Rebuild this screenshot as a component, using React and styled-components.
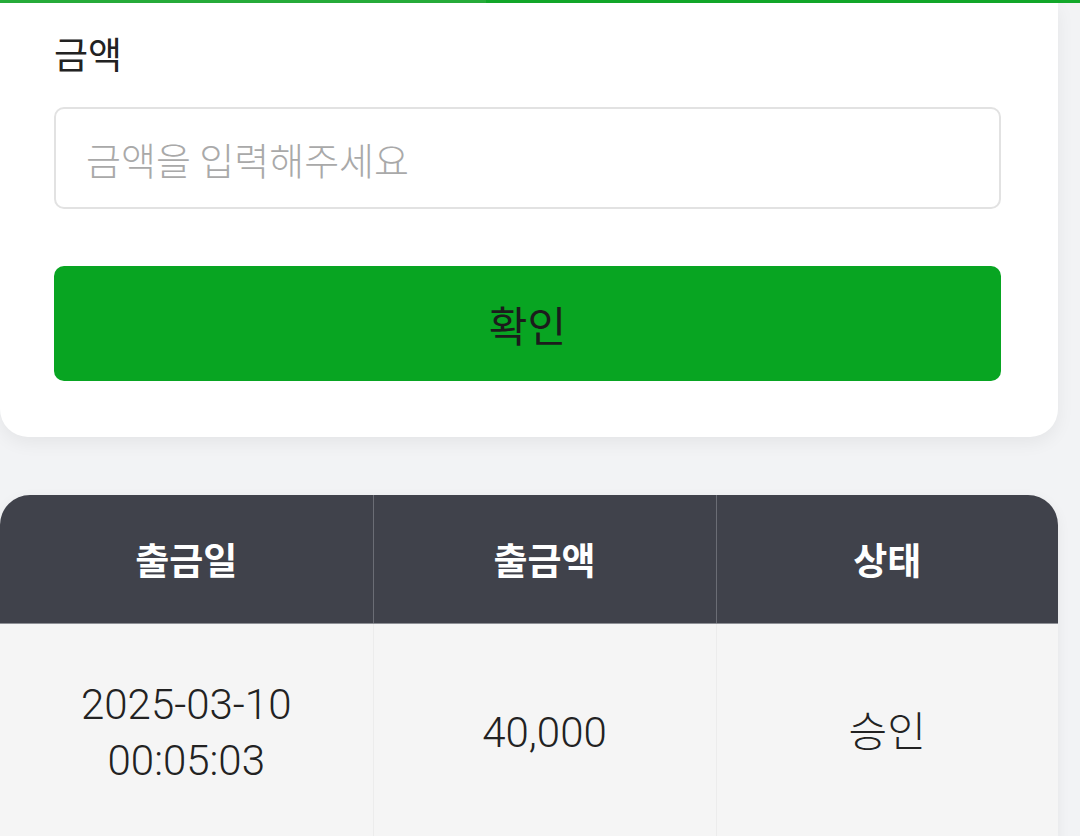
import React from "react";
import styled, { createGlobalStyle } from "styled-components";

const Global = createGlobalStyle`
  html, body { margin: 0; padding: 0; }
  body {
    background: #f2f3f5;
    font-family: Roboto, "Noto Sans CJK KR", sans-serif;
    color: #222;
    overflow: hidden;
  }
  * { box-sizing: border-box; }
`;

const Page = styled.div`
  width: 1080px;
  min-height: 836px;
  background: #f2f3f5;
`;

const TopLine = styled.div`
  height: 3px;
  background: linear-gradient(90deg, #27ad3a 0%, #27ad3a 45%, #12a82a 45%, #12a82a 100%);
`;

const Content = styled.div`
  width: 1058px;
`;

const Card = styled.section`
  background: #fff;
  border-radius: 0 0 28px 28px;
  padding: 22px 57px 56px 54px;
  box-shadow: 0 6px 18px rgba(0, 0, 0, 0.06);
  display: flex;
  flex-direction: column;
`;

const Label = styled.label`
  font-family: "Noto Sans CJK KR", sans-serif;
  font-size: 37px;
  line-height: 56px;
  font-weight: 400;
  color: #222;
`;

const Input = styled.input`
  margin-top: 26px;
  height: 102px;
  border: 2px solid #e2e2e2;
  border-radius: 10px;
  padding: 0 30px;
  font-family: "Noto Sans CJK KR", sans-serif;
  font-size: 38px;
  font-weight: 300;
  color: #222;
  outline: none;
  &::placeholder { color: #a9a9a9; }
`;

const Button = styled.button`
  margin-top: 57px;
  height: 115px;
  border: none;
  border-radius: 10px;
  background: #08a522;
  color: #1c1c1c;
  font-family: "Noto Sans CJK KR", sans-serif;
  font-size: 42px;
  font-weight: 400;
`;

const TableWrap = styled.div`
  margin-top: 58px;
  border-radius: 30px 30px 0 0;
  overflow: hidden;
  box-shadow: 0 4px 14px rgba(0, 0, 0, 0.06);
`;

const Table = styled.table`
  width: 100%;
  border-collapse: collapse;
  table-layout: fixed;
`;

const Th = styled.th`
  height: 128px;
  background: #40424b;
  color: #fff;
  font-family: "Noto Sans CJK KR", sans-serif;
  font-weight: 700;
  font-size: 37px;
  border-bottom: 1px solid #8e9096;
  border-left: 1px solid #6b6d75;
  &:first-child { border-left: none; }
  padding: 0;
`;

const Td = styled.td`
  height: 220px;
  background: #f5f5f5;
  text-align: center;
  font-size: 42px;
  font-weight: 300;
  line-height: 56px;
  color: #222;
  border-left: 1px solid #ececec;
  &:first-child { border-left: none; }
  padding: 0;
`;

export default function App() {
  return (
    <>
      <Global />
      <Page>
        <TopLine />
        <Content>
          <Card>
            <Label>금액</Label>
            <Input placeholder="금액을 입력해주세요" />
            <Button>확인</Button>
          </Card>
          <TableWrap>
            <Table>
              <colgroup>
                <col style={{ width: "373px" }} />
                <col style={{ width: "343px" }} />
                <col style={{ width: "342px" }} />
              </colgroup>
              <thead>
                <tr>
                  <Th>출금일</Th>
                  <Th>출금액</Th>
                  <Th>상태</Th>
                </tr>
              </thead>
              <tbody>
                <tr>
                  <Td>2025-03-10<br />00:05:03</Td>
                  <Td>40,000</Td>
                  <Td>승인</Td>
                </tr>
              </tbody>
            </Table>
          </TableWrap>
        </Content>
      </Page>
    </>
  );
}
